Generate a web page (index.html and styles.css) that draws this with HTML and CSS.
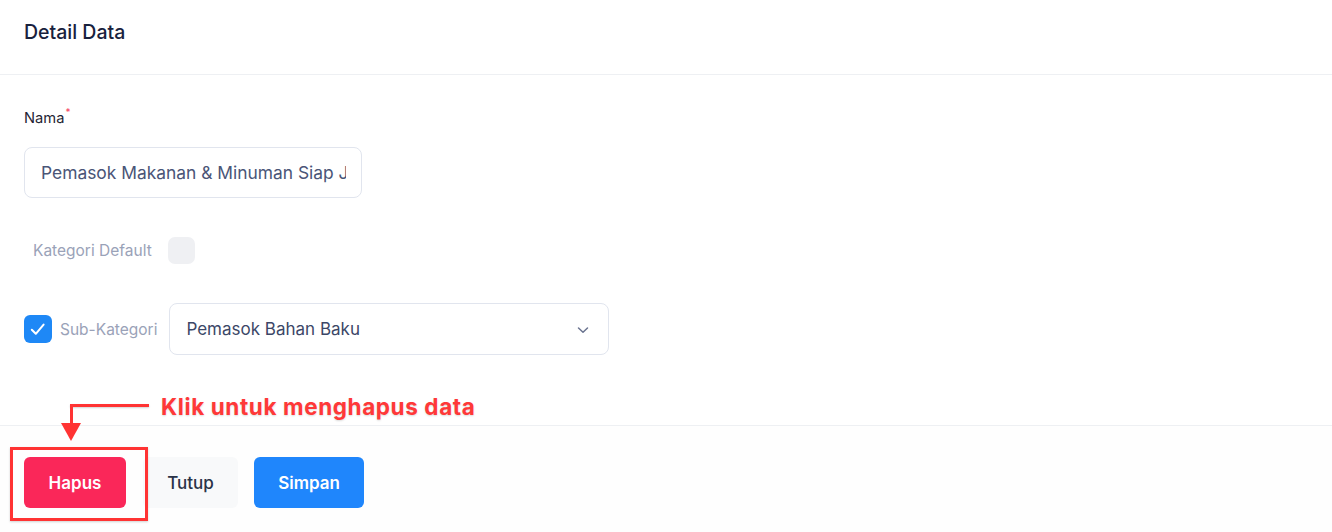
FILE: index.html
```html
<!DOCTYPE html>
<html lang="id">
<head>
<meta charset="utf-8">
<title>Detail Data</title>
<link rel="stylesheet" href="styles.css">
</head>
<body>
<div class="page">
  <header class="header">
    <h1 class="title">Detail Data</h1>
  </header>
  <main class="content">
    <label class="label">Nama<span class="req">*</span></label>
    <div class="input"><span class="input-text">Pemasok Makanan &amp; Minuman Siap Jual</span></div>
    <div class="row-default">
      <span class="muted">Kategori Default</span>
      <span class="check-off"></span>
    </div>
    <div class="row-sub">
      <span class="check-on">
        <svg width="28" height="28" viewBox="0 0 28 28"><path d="M7.8 14.8 L11.8 18.8 L19.6 9.6" fill="none" stroke="#fff" stroke-width="2" stroke-linecap="round" stroke-linejoin="round"/></svg>
      </span>
      <span class="muted">Sub-Kategori</span>
      <div class="select">
        <span>Pemasok Bahan Baku</span>
        <svg class="chev" width="14" height="14" viewBox="0 0 14 14"><path d="M2.5 5 L7 9.3 L11.5 5" fill="none" stroke="#6b7490" stroke-width="1.5" stroke-linecap="round" stroke-linejoin="round"/></svg>
      </div>
    </div>
  </main>
  <footer class="footer">
    <button class="btn btn-danger">Hapus</button>
    <button class="btn btn-light">Tutup</button>
    <button class="btn btn-primary">Simpan</button>
  </footer>

  <div class="note">
    <div class="note-box"></div>
    <div class="note-hline"></div>
    <div class="note-vline"></div>
    <div class="note-head"></div>
    <div class="note-text">Klik untuk menghapus data</div>
  </div>
</div>
</body>
</html>
```
FILE: styles.css
```css
* { box-sizing: border-box; }
html, body { margin: 0; padding: 0; background: #ffffff; }
body { font-family: Inter, "Noto Sans", sans-serif; color: #1f2937; width: 1332px; height: 532px; overflow: hidden; }
.page { position: relative; height: 532px; display: flex; flex-direction: column; }

.header { height: 75px; padding: 20px 24px 0; border-bottom: 1px solid #eef0f3; }
.title { margin: 0; font-size: 19.5px; line-height: 24px; font-weight: 500; color: #18213d; }

.content { height: 351px; padding: 33px 24px 0; border-bottom: 1px solid #eef0f3; }
.label { display: block; font-size: 14.7px; line-height: 21px; color: #1f2433; }
.req { position: relative; top: -7px; color: #f43f5e; font-size: 10px; margin-left: 1px; }

.input { margin-top: 17px; width: 338px; height: 51px; border: 1px solid #e1e5ee; border-radius: 8px; padding: 0 15px 0 16px; display: flex; align-items: center; font-size: 17.4px; color: #4a5577; }
.input-text { display: block; width: 305px; white-space: nowrap; overflow: hidden; }

.row-default { margin-top: 39px; display: flex; align-items: center; padding-left: 9px; height: 27px; }
.muted { font-size: 15.5px; color: #9aa2b8; }
.check-off { width: 27px; height: 27px; border-radius: 7px; background: #eff0f3; margin-left: 16px; }

.row-sub { margin-top: 39px; display: flex; align-items: center; height: 52px; }
.check-on { width: 28px; height: 28px; border-radius: 6px; background: #1e88f6; display: flex; align-items: center; justify-content: center; }
.row-sub .muted { margin-left: 8px; }
.select { margin-left: 12px; width: 440px; height: 52px; border: 1px solid #e1e5ee; border-radius: 8px; padding: 0 18px 0 16px; display: flex; align-items: center; justify-content: space-between; font-size: 17px; color: #3c4767; }
.chev { margin-top: 1px; }

.footer { flex: 1; background: #fefefe; padding: 31px 24px 0; display: flex; align-items: flex-start; }
.btn { height: 51px; padding: 0 24px; border: none; border-radius: 6px; font-family: Inter, "Noto Sans", sans-serif; font-size: 17px; font-weight: 600; cursor: pointer; }
.btn-danger { width: 102px; background: #fa2759; color: #ffffff; }
.btn-light { width: 95px; margin-left: 17px; background: #f8f9fa; color: #2a3348; font-weight: 500; }
.btn-primary { width: 110px; margin-left: 16px; background: #1f86fc; color: #ffffff; }

.note { position: absolute; inset: 0; pointer-events: none; }
.note-box { position: absolute; left: 10px; top: 447px; width: 138px; height: 74px; border: 3px solid #ff3333; box-shadow: 0 1px 2px rgba(0,0,0,0.18); }
.note-hline { position: absolute; left: 70px; top: 404px; width: 79px; height: 3px; background: #ff3333; box-shadow: 0 1px 2px rgba(0,0,0,0.18); }
.note-vline { position: absolute; left: 70px; top: 404px; width: 3px; height: 22px; background: #ff3333; }
.note-head { position: absolute; left: 61px; top: 423px; width: 0; height: 0; border-left: 10.5px solid transparent; border-right: 10.5px solid transparent; border-top: 18px solid #ff3333; }
.note-text { position: absolute; left: 161px; top: 393px; font-size: 22.5px; letter-spacing: 0.6px; line-height: 28px; font-weight: 700; color: #ff3838; text-shadow: 0 1px 2px rgba(0,0,0,0.15); white-space: nowrap; }
```
